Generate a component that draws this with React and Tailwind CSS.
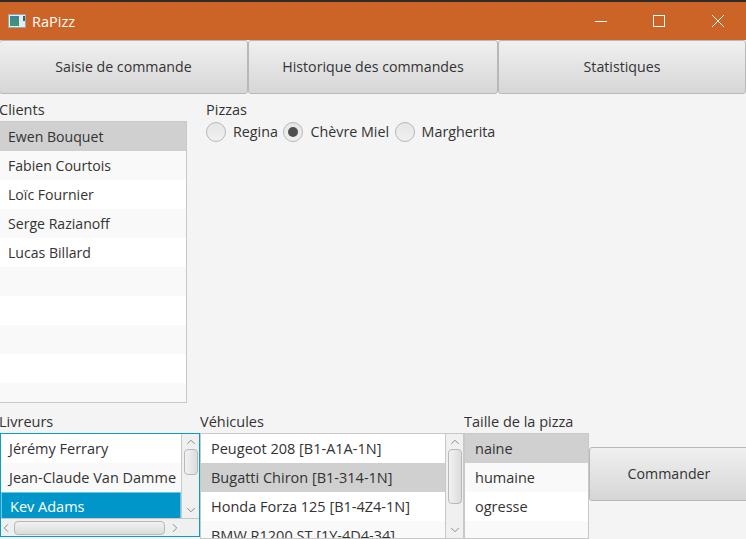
import { ChevronDown, ChevronLeft, ChevronRight, ChevronUp } from "lucide-react";

const clients = ["Ewen Bouquet", "Fabien Courtois", "Loïc Fournier", "Serge Razianoff", "Lucas Billard", "", "", "", "", ""];
const vehicules = ["Peugeot 208 [B1-A1A-1N]", "Bugatti Chiron [B1-314-1N]", "Honda Forza 125 [B1-4Z4-1N]", "BMW R1200 ST [1Y-4D4-34]"];
const tailles = ["naine", "humaine", "ogresse", ""];

const TabButton = ({ label, className }) => (
  <button className={`h-[54px] rounded-[3px] border border-[#b8b8b8] bg-gradient-to-b from-[#f0f0f0] to-[#d6d6d6] text-[14.2px] text-[#333] ${className}`}>
    {label}
  </button>
);

const Row = ({ label, index, selected, className = "pl-[10px]" }) => {
  const bg = selected ? "bg-[#d0d0d0]" : index % 2 ? "bg-[#f9f9f9]" : "bg-white";
  return (
    <div className={`h-[29px] ${bg} flex items-center whitespace-nowrap text-[#333] ${className}`}>
      {label}
    </div>
  );
};

const Radio = ({ label, checked }) => (
  <div className="flex items-center gap-[7px]">
    <span className="flex h-5 w-5 items-center justify-center rounded-full border border-[#b8b8b8] bg-gradient-to-b from-[#e6e6e6] to-[#f0f0f0]">
      {checked && <span className="h-[10px] w-[10px] rounded-full bg-[#505050]" />}
    </span>
    <span className="text-[14.3px] text-[#333]">{label}</span>
  </div>
);

const VScrollbar = ({ thumb }) => (
  <div className="flex h-full w-[18px] shrink-0 flex-col items-center border-l border-[#c8c8c8] bg-[#f0f0f0]">
    <ChevronUp size={14} strokeWidth={1.25} className="mt-[1px] shrink-0 text-[#666]" />
    <div className={`w-[14px] shrink-0 rounded-[4px] border border-[#b8b8b8] bg-gradient-to-r from-[#f2f2f2] to-[#dcdcdc] ${thumb}`} />
    <div className="flex-1" />
    <ChevronDown size={14} strokeWidth={1.25} className="mb-[1px] shrink-0 text-[#666]" />
  </div>
);

const App = () => {
  return (
    <div className="flex h-[539px] w-[746px] flex-col overflow-hidden bg-[#f4f4f4] text-[14.5px] font-['Open_Sans',sans-serif]">
      <div className="h-[2px] shrink-0 bg-[#2e2a28]" />
      <div className="flex h-[38px] shrink-0 items-center bg-[#cc6428] pl-2 text-white">
        <svg width="18" height="14" viewBox="0 0 18 14" className="shrink-0">
          <defs>
            <linearGradient id="appIcon" x1="0" y1="0" x2="0" y2="1">
              <stop offset="0" stopColor="#3f7f9f" />
              <stop offset="1" stopColor="#3f9a72" />
            </linearGradient>
          </defs>
          <rect x="0.5" y="0.5" width="17" height="13" fill="#e6ecee" stroke="#9aa8ae" />
          <rect x="2" y="2" width="9" height="10" fill="url(#appIcon)" />
          <rect x="15" y="2" width="2" height="5" fill="#40606a" />
        </svg>
        <span className="ml-[6px] mt-[1px] text-[14.5px]">RaPizz</span>
        <div className="ml-auto flex items-center">
          <svg width="12" height="12" viewBox="0 0 12 12" className="mr-[46px]" fill="none" stroke="white">
            <path d="M0 6.5h12" />
          </svg>
          <svg width="12" height="12" viewBox="0 0 12 12" className="mr-[47px]" fill="none" stroke="white">
            <rect x="0.5" y="0.5" width="11" height="11" />
          </svg>
          <svg width="12" height="12" viewBox="0 0 12 12" className="mr-[22px]" fill="none" stroke="white">
            <path d="M0 0l12 12M12 0L0 12" />
          </svg>
        </div>
      </div>

      <div className="flex shrink-0">
        <TabButton label="Saisie de commande" className="ml-[-1px] w-[249px]" />
        <TabButton label="Historique des commandes" className="w-[250px]" />
        <TabButton label="Statistiques" className="flex-1" />
      </div>

      <div className="flex h-[309px] shrink-0">
        <div className="flex w-[187px] shrink-0 flex-col">
          <div className="ml-[-1px] flex h-[27px] shrink-0 items-end text-[#333]">Clients</div>
          <div className="flex-1 overflow-hidden border-y border-r border-[#c8c8c8] text-[14.1px]">
            {clients.map((c, i) => (
              <Row key={i} label={c} index={i} selected={i === 0} className="pl-[8px]" />
            ))}
          </div>
        </div>
        <div className="ml-[19px] flex flex-col">
          <div className="flex h-[27px] items-end text-[#333]">Pizzas</div>
          <div className="flex gap-[5.5px]">
            <Radio label="Regina" />
            <Radio label="Chèvre Miel" checked />
            <Radio label="Margherita" />
          </div>
        </div>
      </div>

      <div className="flex min-h-0 flex-1">
        <div className="flex w-[200px] shrink-0 flex-col">
          <div className="ml-[-1px] flex h-[30px] shrink-0 items-end text-[#333]">Livreurs</div>
          <div className="flex h-[104px] flex-col overflow-hidden border border-[#039ed3] shadow-[inset_0_0_0_1px_#a8dcee]">
            <div className="flex h-[84px] shrink-0">
              <div className="flex-1 overflow-hidden">
                <Row label="Jérémy Ferrary" index={0} className="pl-[8px]" />
                <Row label="Jean-Claude Van Damme" index={1} className="pl-[8px]" />
                <div className="flex h-[29px] items-center bg-[#0096c9] pl-[9px] text-white shadow-[inset_0_0_0_1px_#6cc5e4]">Kev Adams</div>
              </div>
              <VScrollbar thumb="h-[26px]" />
            </div>
            <div className="flex h-[18px] shrink-0 items-center border-t border-[#c8c8c8] bg-[#f0f0f0]">
              <ChevronLeft size={14} strokeWidth={1.25} className="ml-[-2px] shrink-0 text-[#666]" />
              <div className="ml-[1px] h-[14px] w-[151px] shrink-0 rounded-[4px] border border-[#b8b8b8] bg-gradient-to-b from-[#f2f2f2] to-[#dcdcdc]" />
              <ChevronRight size={14} strokeWidth={1.25} className="ml-[3px] shrink-0 text-[#666]" />
            </div>
          </div>
        </div>

        <div className="flex w-[264px] shrink-0 flex-col">
          <div className="flex h-[30px] shrink-0 items-end text-[#333]">Véhicules</div>
          <div className="flex h-[106px] border border-[#c8c8c8]">
            <div className="flex-1 overflow-hidden">
              {vehicules.map((v, i) => (
                <Row key={v} label={v} index={i} selected={i === 1} />
              ))}
            </div>
            <VScrollbar thumb="h-[55px]" />
          </div>
        </div>

        <div className="flex w-[125px] shrink-0 flex-col">
          <div className="flex h-[30px] shrink-0 items-end text-[#333]">Taille de la pizza</div>
          <div className="h-[106px] overflow-hidden border border-[#c8c8c8]">
            {tailles.map((t, i) => (
              <Row key={i} label={t} index={i} selected={i === 0} />
            ))}
          </div>
        </div>

        <div className="flex-1 pt-[44px]">
          <button className="h-[54px] w-[160px] rounded-[3px] border border-[#b8b8b8] bg-gradient-to-b from-[#f0f0f0] to-[#d6d6d6] text-[14.2px] text-[#333]">
            Commander
          </button>
        </div>
      </div>
    </div>
  );
};

export default App;
